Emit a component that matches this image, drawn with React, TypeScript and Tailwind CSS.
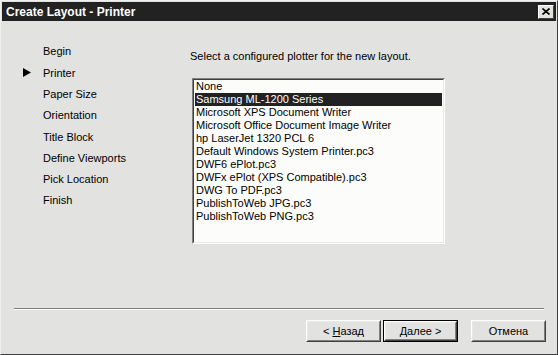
import React from 'react';

const steps = [
  'Begin',
  'Printer',
  'Paper Size',
  'Orientation',
  'Title Block',
  'Define Viewports',
  'Pick Location',
  'Finish',
];

const plotters = [
  'None',
  'Samsung ML-1200 Series',
  'Microsoft XPS Document Writer',
  'Microsoft Office Document Image Writer',
  'hp LaserJet 1320 PCL 6',
  'Default Windows System Printer.pc3',
  'DWF6 ePlot.pc3',
  'DWFx ePlot (XPS Compatible).pc3',
  'DWG To PDF.pc3',
  'PublishToWeb JPG.pc3',
  'PublishToWeb PNG.pc3',
];

function WinButton({ children, isDefault }: { children: React.ReactNode; isDefault?: boolean }) {
  return (
    <div className={`h-[22px] w-[75px] ${isDefault ? 'border border-black' : ''}`}>
      <div className="h-full w-full border border-t-white border-l-white border-r-[#404040] border-b-[#404040]">
        <div className="flex h-full w-full items-center justify-center border border-t-[#e8e8e8] border-l-[#e8e8e8] border-r-[#808080] border-b-[#808080] bg-[#e2e2e0] text-[11px] text-black">
          {children}
        </div>
      </div>
    </div>
  );
}

export default function App() {
  return (
    <div
      className="flex h-[355px] w-[558px] flex-col border border-t-[#f0f0f0] border-l-[#f0f0f0] border-r-[#404040] border-b-[#404040] bg-[#e2e2e0] p-[1px]"
      style={{ fontFamily: '"Liberation Sans", Arial, sans-serif' }}
    >
      {/* title bar */}
      <div className="flex h-[19px] items-center justify-between bg-[#222222] pl-[4px] pr-[2px]">
        <span className="text-[12px] font-bold text-white">Create Layout - Printer</span>
        <div className="flex h-[14px] w-[16px] items-center justify-center border border-t-white border-l-white border-r-[#404040] border-b-[#404040] bg-[#e2e2e0]">
          <svg width="8" height="7" viewBox="0 0 8 7">
            <path d="M0.5 0.5 L7.5 6.5 M7.5 0.5 L0.5 6.5" stroke="black" strokeWidth="1.6" />
          </svg>
        </div>
      </div>

      {/* content */}
      <div className="flex h-[287px]">
        <div className="w-[188px] pt-[20px]">
          {steps.map((s) => (
            <div key={s} className="flex h-[21.3px] items-center text-[11px] text-black">
              <div className="flex w-[41px] justify-end pr-[12px]">
                {s === 'Printer' && (
                  <svg width="8" height="9" viewBox="0 0 8 9">
                    <path d="M0 0 L8 4.5 L0 9 Z" fill="black" />
                  </svg>
                )}
              </div>
              <span>{s}</span>
            </div>
          ))}
        </div>
        <div className="flex flex-col pt-[29px]">
          <div className="h-[13px] text-[11px] leading-[13px] text-black">
            Select a configured plotter for the new layout.
          </div>
          <div className="mt-[15px] ml-[2px] h-[166px] w-[253px] border border-t-[#808080] border-l-[#808080] border-r-white border-b-white">
            <div className="h-full w-full border border-t-[#404040] border-l-[#404040] border-r-[#e8e8e8] border-b-[#e8e8e8] bg-[#fcfcfa] px-[1px]">
              {plotters.map((p, i) => (
                <div
                  key={p}
                  className={`h-[13px] whitespace-nowrap pl-[1px] text-[11px] leading-[13px] ${
                    i === 1 ? 'bg-[#222222] text-white' : 'text-black'
                  }`}
                >
                  {p}
                </div>
              ))}
            </div>
          </div>
        </div>
      </div>

      {/* separator */}
      <div className="mx-[12px] border-t border-b border-t-[#808080] border-b-white" />

      {/* buttons */}
      <div className="flex justify-end gap-[2px] pt-[10px] pr-[10px]">
        <WinButton>
          <span>
            &lt; <span className="underline">Н</span>азад
          </span>
        </WinButton>
        <WinButton isDefault>
          <span>
            <span className="underline">Д</span>алее &gt;
          </span>
        </WinButton>
        <div className="w-[9px]" />
        <WinButton>Отмена</WinButton>
      </div>
    </div>
  );
}
